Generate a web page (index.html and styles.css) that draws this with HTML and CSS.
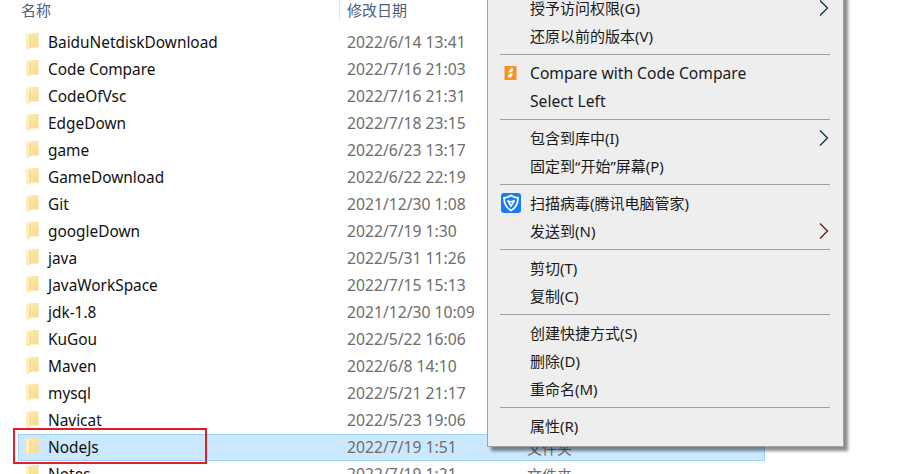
FILE: index.html
```html
<!DOCTYPE html>
<html lang="zh">
<head>
<meta charset="utf-8">
<title>NodeJs</title>
<link rel="stylesheet" href="styles.css">
</head>
<body>
<svg class="defs" width="0" height="0" aria-hidden="true">
  <defs>
    <linearGradient id="fg" x1="0" y1="0" x2="1" y2="1">
      <stop offset="0" stop-color="#fef0c0"/>
      <stop offset="1" stop-color="#f7d67e"/>
    </linearGradient>
  </defs>
  <symbol id="folder" viewBox="0 0 13 17">
    <path d="M0 1 L5 0 H12.5 V14.5 H5 L2 17 L0 15 Z" fill="url(#fg)"/>
    <path d="M0.5 1 L4 2.5 V13.5 L2 16 L0.5 14.5 Z" fill="#fdeec6"/>
    <path d="M4 2.5 V14" stroke="#f2d27c" stroke-width="1"/>
  </symbol>
</svg>
<main class="explorer">
  <header class="head">
    <span class="h-name">名称</span>
    <span class="h-date">修改日期</span>
  </header>
  <ul class="list">
    <li class="row"><svg class="ficon"><use href="#folder"/></svg><span class="name">BaiduNetdiskDownload</span><span class="date">2022/6/14 13:41</span></li>
    <li class="row"><svg class="ficon"><use href="#folder"/></svg><span class="name">Code Compare</span><span class="date">2022/7/16 21:03</span></li>
    <li class="row"><svg class="ficon"><use href="#folder"/></svg><span class="name">CodeOfVsc</span><span class="date">2022/7/16 21:31</span></li>
    <li class="row"><svg class="ficon"><use href="#folder"/></svg><span class="name">EdgeDown</span><span class="date">2022/7/18 23:15</span></li>
    <li class="row"><svg class="ficon"><use href="#folder"/></svg><span class="name">game</span><span class="date">2022/6/23 13:17</span></li>
    <li class="row"><svg class="ficon"><use href="#folder"/></svg><span class="name">GameDownload</span><span class="date">2022/6/22 22:19</span></li>
    <li class="row"><svg class="ficon"><use href="#folder"/></svg><span class="name">Git</span><span class="date">2021/12/30 1:08</span></li>
    <li class="row"><svg class="ficon"><use href="#folder"/></svg><span class="name">googleDown</span><span class="date">2022/7/19 1:30</span></li>
    <li class="row"><svg class="ficon"><use href="#folder"/></svg><span class="name">java</span><span class="date">2022/5/31 11:26</span></li>
    <li class="row"><svg class="ficon"><use href="#folder"/></svg><span class="name">JavaWorkSpace</span><span class="date">2022/7/15 15:13</span></li>
    <li class="row"><svg class="ficon"><use href="#folder"/></svg><span class="name">jdk-1.8</span><span class="date">2021/12/30 10:09</span></li>
    <li class="row"><svg class="ficon"><use href="#folder"/></svg><span class="name">KuGou</span><span class="date">2022/5/22 16:06</span></li>
    <li class="row"><svg class="ficon"><use href="#folder"/></svg><span class="name">Maven</span><span class="date">2022/6/8 14:10</span></li>
    <li class="row"><svg class="ficon"><use href="#folder"/></svg><span class="name">mysql</span><span class="date">2022/5/21 21:17</span></li>
    <li class="row"><svg class="ficon"><use href="#folder"/></svg><span class="name">Navicat</span><span class="date">2022/5/23 19:06</span></li>
    <li class="row selected"><svg class="ficon"><use href="#folder"/></svg><span class="name">NodeJs</span><span class="date">2022/7/19 1:51</span><span class="type">文件夹</span></li>
    <li class="row"><svg class="ficon"><use href="#folder"/></svg><span class="name">Notes</span><span class="date">2022/7/19 1:21</span><span class="type">文件夹</span></li>
  </ul>
</main>
<div class="redbox"></div>
<nav class="menu">
  <div class="item">授予访问权限(G)<svg class="arrow" viewBox="0 0 10 16"><path d="M1 0.5 L8.5 8 L1 15.5" fill="none" stroke="#12303f" stroke-width="1.3"/></svg></div>
  <div class="item">还原以前的版本(V)</div>
  <hr class="sep">
  <div class="item latin"><svg class="micon cc" viewBox="0 0 13 14"><rect x="0.5" width="12" height="14" fill="#f39325"/><path d="M6 2.5 H9 V5 L6.5 6.5 H4.5 V5.5 L6 4.5 Z M8.5 7.5 V9 L7 11.5 H4 V9.5 L6.5 7.5 Z" fill="#fff"/></svg>Compare with Code Compare</div>
  <div class="item latin">Select Left</div>
  <hr class="sep">
  <div class="item">包含到库中(I)<svg class="arrow" viewBox="0 0 10 16"><path d="M1 0.5 L8.5 8 L1 15.5" fill="none" stroke="#12303f" stroke-width="1.3"/></svg></div>
  <div class="item">固定到“开始”屏幕(P)</div>
  <hr class="sep">
  <div class="item"><svg class="micon tx" viewBox="0 0 20 20"><rect width="20" height="20" rx="3" fill="#1a7cf2"/><path d="M10 2.5 C12.5 4 15 4.8 17 4.8 C17 11 14.5 15 10 17.5 C5.5 15 3 11 3 4.8 C5 4.8 7.5 4 10 2.5 Z" fill="none" stroke="#fff" stroke-width="1.7"/><path d="M6.5 7.5 C8.5 8.8 11.5 8.8 13.5 7.5 L10 13 Z" fill="none" stroke="#fff" stroke-width="1.5"/></svg>扫描病毒(腾讯电脑管家)</div>
  <div class="item">发送到(N)<svg class="arrow" viewBox="0 0 10 16"><path d="M1 0.5 L8.5 8 L1 15.5" fill="none" stroke="#5a2020" stroke-width="1.3"/></svg></div>
  <hr class="sep">
  <div class="item">剪切(T)</div>
  <div class="item">复制(C)</div>
  <hr class="sep">
  <div class="item">创建快捷方式(S)</div>
  <div class="item">删除(D)</div>
  <div class="item">重命名(M)</div>
  <hr class="sep">
  <div class="item">属性(R)</div>
</nav>
</body>
</html>
```
FILE: styles.css
```css
* { box-sizing: border-box; }
html, body { margin: 0; height: 100%; overflow: hidden; background: #fff; }
body {
  position: relative;
  font-family: "Noto Sans", "Noto Sans CJK SC", sans-serif;
  font-size: 15px;
  color: #1a1a1a;
}
.defs { position: absolute; }
.explorer { padding-left: 18px; width: 765px; }
.head {
  display: flex;
  height: 29px;
  padding-bottom: 9px;
  align-items: center;
  font-size: 15px;
  color: #4c607a;
}
.h-name { width: 322px; padding-left: 3px; border-right: 1px solid #e5e5e5; height: 20px; line-height: 20px; }
.h-date { padding-left: 7px; height: 20px; line-height: 20px; }
.list { list-style: none; margin: 0; padding: 0; }
.row {
  display: flex;
  align-items: center;
  height: 27px;
  border: 1px solid transparent;
}
.row.selected { background: #cce8ff; border-color: #99d1ff; }
.ficon { width: 13px; height: 17px; margin-left: 7px; margin-top: -2px; flex: none; }
.name { width: 299px; margin-left: 9px; padding-bottom: 1px; white-space: nowrap; color: #111; font-size: 15.4px; }
.date { width: 180px; padding-bottom: 1px; color: #6d6d6d; white-space: nowrap; font-size: 15.7px; }
.type { padding-bottom: 1px; color: #6d6d6d; }
.redbox {
  position: absolute;
  left: 13px;
  top: 428px;
  width: 194px;
  height: 36px;
  border: 2px solid #e81c24;
}
.menu {
  position: absolute;
  left: 487px;
  top: -7px;
  width: 357px;
  padding: 0 2px 6px;
  background: #eeeeee;
  border: 1px solid #a0a0a0;
  box-shadow: 4px 4px 3px rgba(0, 0, 0, .45);
}
.item {
  position: relative;
  height: 28px;
  line-height: 28px;
  padding-left: 40px;
  color: #1a1a1a;
  white-space: nowrap;
}
.latin { font-size: 15.65px; }
.sep { height: 1px; margin: 4px 11px 4px 10px; border: 0; background: #a0a0a0; }
.arrow { position: absolute; right: 12px; top: 6px; width: 10px; height: 16px; }
.micon { position: absolute; }
.cc { left: 14px; top: 7px; width: 13px; height: 14px; }
.tx { left: 11px; top: 4px; width: 20px; height: 20px; }
```
